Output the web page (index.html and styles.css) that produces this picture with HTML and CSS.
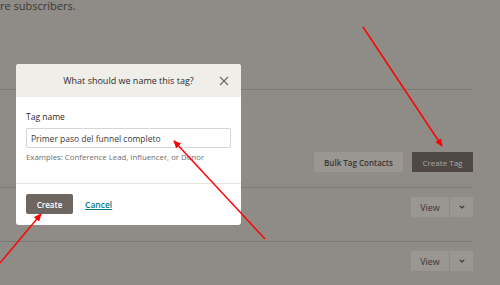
FILE: index.html
```html
<!DOCTYPE html>
<html lang="en">
<head>
  <meta charset="UTF-8" />
  <meta name="viewport" content="width=device-width, initial-scale=1.0" />
  <title>Tags</title>
  <link rel="stylesheet" href="styles.css">
</head>
<body>

<div class="page">
  <p class="intro">re subscribers.</p>
  <div class="rule rule-top"></div>
  <div class="toolbar">
    <button type="button" class="btn btn-light btn-bulk">Bulk Tag Contacts</button>
    <button type="button" class="btn btn-dark">Create Tag</button>
  </div>
  <div class="rule"></div>
  <div class="tag-row">
    <div class="split">
      <button type="button" class="btn btn-light split-main">View</button>
      <button type="button" class="btn btn-light split-caret">
        <svg width="6" height="4" viewBox="0 0 6 4"><path d="M0.8 0.8L3 3L5.2 0.8" stroke="#3a3531" stroke-width="1.2" fill="none"/></svg>
      </button>
    </div>
  </div>
  <div class="rule"></div>
  <div class="tag-row">
    <div class="split">
      <button type="button" class="btn btn-light split-main">View</button>
      <button type="button" class="btn btn-light split-caret">
        <svg width="6" height="4" viewBox="0 0 6 4"><path d="M0.8 0.8L3 3L5.2 0.8" stroke="#3a3531" stroke-width="1.2" fill="none"/></svg>
      </button>
    </div>
  </div>
</div>

<div class="modal">
  <div class="modal-head">
    <span class="modal-title">What should we name this tag?</span>
    <svg class="close" width="10" height="10" viewBox="0 0 10 10">
      <path d="M1 1L9 9M9 1L1 9" stroke="#6b6b6b" stroke-width="1.1" fill="none"/>
    </svg>
  </div>
  <div class="modal-body">
    <label class="field-label" for="tagName">Tag name</label>
    <input id="tagName" class="field" type="text" value="Primer paso del funnel completo">
    <div class="hint">Examples: Conference Lead, Influencer, or Donor</div>
  </div>
  <div class="modal-foot">
    <button type="button" class="btn btn-create">Create</button>
    <a href="#" class="cancel">Cancel</a>
  </div>
</div>

<svg class="arrows" width="500" height="285" viewBox="0 0 500 285">
  <defs>
    <marker id="tip" markerWidth="8" markerHeight="7" refX="7" refY="3.5" orient="auto" markerUnits="userSpaceOnUse">
      <path d="M0 0L8 3.5L0 7Z" fill="#ff0000"/>
    </marker>
  </defs>
  <line x1="363" y1="27" x2="442" y2="146" stroke="#ff0000" stroke-width="1.4" marker-end="url(#tip)"/>
  <line x1="265" y1="239" x2="174" y2="141" stroke="#ff0000" stroke-width="1.4" marker-end="url(#tip)"/>
  <line x1="0" y1="263" x2="41" y2="214" stroke="#ff0000" stroke-width="1.4" marker-end="url(#tip)"/>
</svg>

</body>
</html>
```

FILE: styles.css
```css
* { box-sizing: border-box; }
body {
  margin: 0;
  width: 500px;
  height: 285px;
  overflow: hidden;
  background: #8f8b86;
  font-family: 'Open Sans', 'Liberation Sans', sans-serif;
  color: #3b3632;
  position: relative;
}
.page {
  display: flow-root;
  width: 473px;
}
.intro {
  margin: 0;
  height: 10px;
  font-size: 11px;
  line-height: 11px;
  color: #3d3834;
}
.rule {
  height: 1px;
  background: #7c7873;
}
.rule-top {
  margin-top: 79px;
}
.toolbar {
  display: flex;
  justify-content: flex-end;
  gap: 9px;
  padding: 62px 0 15px;
}
.btn {
  font-family: inherit;
  border: none;
  height: 20px;
  padding: 0 10px;
  font-size: 8px;
  cursor: pointer;
}
.btn-light {
  background: #9a9691;
  color: #3a3531;
}
.btn-bulk {
  width: 89px;
  font-weight: 600;
}
.btn-dark {
  background: #504843;
  color: #aca7a1;
  width: 61px;
}
.tag-row {
  display: flex;
  justify-content: flex-end;
  padding: 9px 0 24px;
}
.split {
  display: flex;
  gap: 1px;
  background: #8c8883;
}
.split-main {
  width: 38px;
  padding: 0;
  font-size: 9px;
}
.split-caret {
  width: 23px;
  padding: 0;
  display: flex;
  align-items: center;
  justify-content: center;
}
.modal {
  position: absolute;
  left: 16px;
  top: 64px;
  width: 225px;
  height: 161px;
  background: #ffffff;
  border-radius: 3px;
  overflow: hidden;
  display: flex;
  flex-direction: column;
}
.modal-head {
  height: 33px;
  background: #efeee9;
  display: flex;
  align-items: center;
  justify-content: center;
  position: relative;
}
.modal-title {
  font-size: 9px;
  color: #2b2b2b;
}
.close {
  position: absolute;
  right: 12px;
  top: 12px;
}
.modal-body {
  padding: 14px 10px 0;
  height: 87px;
  border-bottom: 1px solid #e6e4e0;
}
.field-label {
  display: block;
  font-size: 8.5px;
  color: #2b2b2b;
  margin-bottom: 6px;
}
.field {
  display: block;
  width: 205px;
  height: 20px;
  border: 1px solid #d6d6d6;
  border-radius: 2px;
  padding: 0 4px;
  font-family: inherit;
  font-size: 8.5px;
  color: #3b3b3b;
}
.hint {
  margin-top: 4px;
  font-size: 7.8px;
  color: #6e6e6e;
}
.modal-foot {
  display: flex;
  align-items: center;
  gap: 12px;
  padding: 10px 10px 0;
}
.btn-create {
  width: 47px;
  padding: 0;
  background: #6e6761;
  color: #ffffff;
  font-weight: 600;
  border-radius: 2px;
}
.cancel {
  font-size: 8.5px;
  color: #007c89;
  font-weight: 600;
}
.arrows {
  position: absolute;
  left: 0;
  top: 0;
}
```
